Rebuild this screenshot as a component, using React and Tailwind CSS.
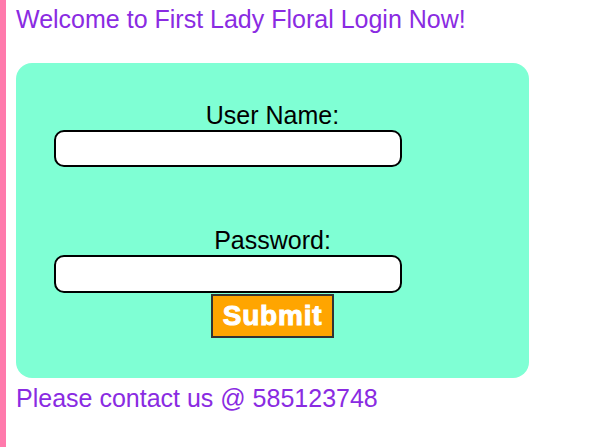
export default function App() {
  return (
    <div className="min-h-screen bg-white flex font-['Liberation_Sans',Arial,sans-serif]">
      <div className="w-[6px] bg-[#ff7aac] shrink-0" />
      <div className="pl-[10px] flex flex-col">
        <h1 className="mt-[5px] text-[25px] leading-[28px] text-[#8a2be2] whitespace-nowrap">
          Welcome to First Lady Floral Login Now!
        </h1>
        <div className="mt-[30px] w-[513px] h-[315px] rounded-[16px] bg-[#7fffd4] pt-[38px] flex flex-col">
          <div className="text-center text-[25px] leading-[28px] text-black">User Name:</div>
          <input
            type="text"
            className="ml-[38px] mt-[1px] w-[348px] h-[37px] bg-white border-2 border-black rounded-[10px] outline-none"
          />
          <div className="mt-[59px] text-center text-[25px] leading-[28px] text-black">Password:</div>
          <input
            type="password"
            className="ml-[38px] mt-[1px] w-[348px] h-[38px] bg-white border-2 border-black rounded-[10px] outline-none"
          />
          <div className="mt-[1px] flex justify-center">
            <button className="w-[123px] h-[44px] bg-[#ffa500] border-2 border-[#333] text-white font-bold text-[28px] leading-none tracking-[0.8px] [-webkit-text-stroke:1px_white]">
              Submit
            </button>
          </div>
        </div>
        <p className="mt-[6px] text-[25px] leading-[28px] text-[#8a2be2] whitespace-nowrap">
          Please contact us @ 585123748
        </p>
      </div>
    </div>
  );
}
